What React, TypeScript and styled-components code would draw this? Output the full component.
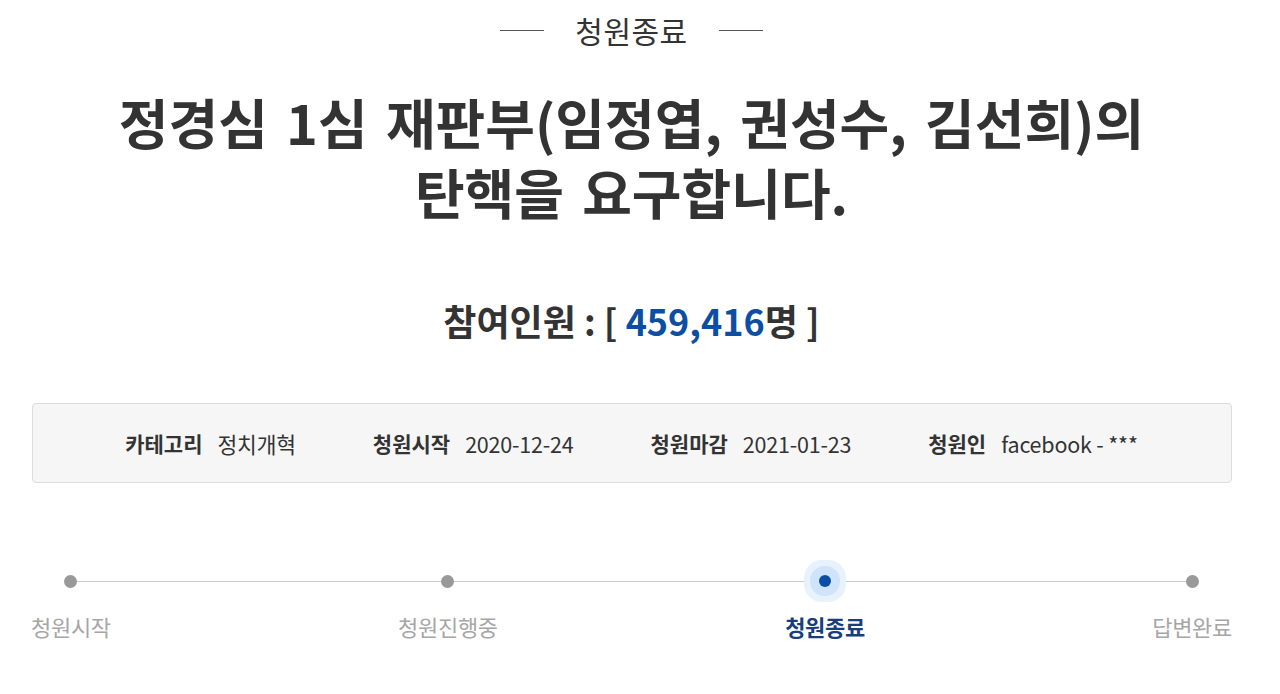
import styled, { createGlobalStyle } from "styled-components";

const GlobalStyle = createGlobalStyle`
  * { box-sizing: border-box; }
  body {
    margin: 0;
    background: #ffffff;
    font-family: "Noto Sans CJK KR", "Noto Sans", sans-serif;
    color: #333333;
  }
`;

type Step = { label: string; state: "done" | "current" | "todo" };

const steps: Step[] = [
  { label: "청원시작", state: "done" },
  { label: "청원진행중", state: "done" },
  { label: "청원종료", state: "current" },
  { label: "답변완료", state: "todo" },
];

const info = [
  { key: "카테고리", value: "정치개혁" },
  { key: "청원시작", value: "2020-12-24" },
  { key: "청원마감", value: "2021-01-23" },
  { key: "청원인", value: "facebook - ***" },
];

export default function App() {
  return (
    <>
      <GlobalStyle />
      <Wrapper>
        <Container>
          <Status>
            <Dash />
            <StatusText>청원종료</StatusText>
            <Dash />
          </Status>
          <Title>
            <TitleLine>정경심 1심 재판부(임정엽, 권성수, 김선희)의</TitleLine>
            <TitleLine>탄핵을 요구합니다.</TitleLine>
          </Title>
          <Count>
            참여인원 : [ <Num>459,416</Num>명 ]
          </Count>
          <InfoBox>
            {info.map((item) => (
              <InfoItem key={item.key}>
                <InfoKey>{item.key}</InfoKey>
                <InfoValue>{item.value}</InfoValue>
              </InfoItem>
            ))}
          </InfoBox>
          <Steps>
            {steps.map((step) => (
              <StepItem key={step.label}>
                <DotArea>
                  {step.state === "current" ? <ActiveDot /> : <Dot />}
                </DotArea>
                <StepLabel $active={step.state === "current"}>
                  {step.label}
                </StepLabel>
              </StepItem>
            ))}
          </Steps>
        </Container>
      </Wrapper>
    </>
  );
}

const Wrapper = styled.div`
  width: 100%;
  padding-left: 31px;
`;

const Container = styled.div`
  width: 1201px;
  display: flex;
  flex-direction: column;
  align-items: center;
`;

const Status = styled.div`
  height: 60px;
  display: flex;
  align-items: center;
  gap: 31px;
`;

const Dash = styled.span`
  width: 44px;
  height: 1px;
  background: #555555;
`;

const StatusText = styled.span`
  font-size: 30px;
  font-weight: 400;
  color: #333333;
  letter-spacing: 0.5px;
`;

const Title = styled.h1`
  margin: 27px 0 0;
  display: flex;
  flex-direction: column;
  align-items: center;
  font-size: 54px;
  font-weight: 700;
  color: #333333;
  word-spacing: 6px;
`;

const TitleLine = styled.span`
  display: block;
  height: 70px;
  line-height: 70px;
  white-space: nowrap;
`;

const Count = styled.div`
  margin-top: 68px;
  font-size: 36px;
  font-weight: 700;
  line-height: 50px;
  color: #333333;
`;

const Num = styled.span`
  color: #0b4ea2;
`;

const InfoBox = styled.div`
  margin-top: 58px;
  width: 1200px;
  height: 80px;
  background: #f6f6f6;
  border: 1px solid #dddddd;
  border-radius: 4px;
  display: flex;
  align-items: center;
  justify-content: center;
  gap: 77px;
`;

const InfoItem = styled.div`
  display: flex;
  align-items: center;
  gap: 15px;
  font-size: 21px;
  color: #333333;
`;

const InfoKey = styled.span`
  font-weight: 700;
`;

const InfoValue = styled.span`
  font-weight: 400;
  font-size: 21.5px;
  letter-spacing: -0.2px;
`;

const Steps = styled.div`
  position: relative;
  margin-top: 77px;
  width: 1201px;
  display: flex;
  justify-content: space-between;

  &::before {
    content: "";
    position: absolute;
    top: 21px;
    left: 39px;
    right: 40px;
    height: 1px;
    background: #cccccc;
  }
`;

const StepItem = styled.div`
  position: relative;
  display: flex;
  flex-direction: column;
  align-items: center;
`;

const DotArea = styled.div`
  height: 42px;
  display: flex;
  align-items: center;
  justify-content: center;
`;

const Dot = styled.span`
  width: 13px;
  height: 13px;
  border-radius: 50%;
  background: #999999;
`;

const ActiveDot = styled.span`
  width: 12px;
  height: 12px;
  border-radius: 50%;
  background: #0b4ea2;
  box-shadow: 0 0 0 9px #cfe4fa, 0 0 0 15px #e8f2fd;
`;

const StepLabel = styled.span<{ $active: boolean }>`
  margin-top: 9px;
  font-size: 22px;
  line-height: 30px;
  font-weight: ${(p) => (p.$active ? 700 : 400)};
  color: ${(p) => (p.$active ? "#183f7c" : "#a6a6a6")};
  letter-spacing: -0.3px;
`;
